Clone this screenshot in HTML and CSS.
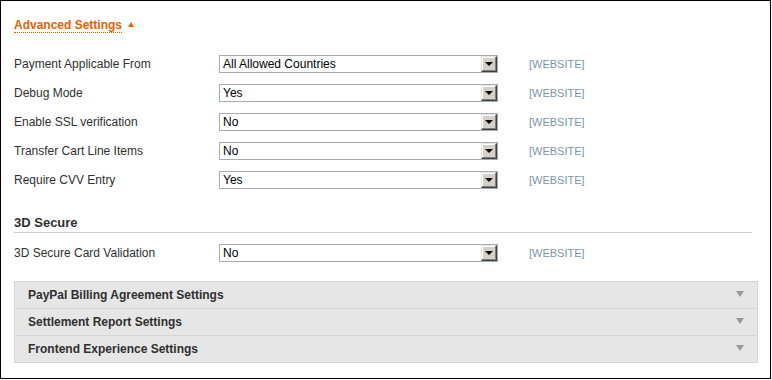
FILE: index.html
```html
<!DOCTYPE html>
<html>
<head>
<meta charset="utf-8">
<link rel="stylesheet" href="styles.css">
</head>
<body>
<div class="panel">
  <div class="section-head"><a class="toggle">Advanced Settings</a><span class="up"></span></div>

  <div class="rows">
    <div class="row">
      <div class="label">Payment Applicable From</div>
      <div class="select"><span class="val">All Allowed Countries</span><span class="btn"><span class="tri"></span></span></div>
      <div class="scope">[WEBSITE]</div>
    </div>
    <div class="row">
      <div class="label">Debug Mode</div>
      <div class="select"><span class="val">Yes</span><span class="btn"><span class="tri"></span></span></div>
      <div class="scope">[WEBSITE]</div>
    </div>
    <div class="row">
      <div class="label">Enable SSL verification</div>
      <div class="select"><span class="val">No</span><span class="btn"><span class="tri"></span></span></div>
      <div class="scope">[WEBSITE]</div>
    </div>
    <div class="row">
      <div class="label">Transfer Cart Line Items</div>
      <div class="select"><span class="val">No</span><span class="btn"><span class="tri"></span></span></div>
      <div class="scope">[WEBSITE]</div>
    </div>
    <div class="row">
      <div class="label">Require CVV Entry</div>
      <div class="select"><span class="val">Yes</span><span class="btn"><span class="tri"></span></span></div>
      <div class="scope">[WEBSITE]</div>
    </div>
  </div>

  <div class="group-title">3D Secure</div>
  <div class="rows">
    <div class="row">
      <div class="label">3D Secure Card Validation</div>
      <div class="select"><span class="val">No</span><span class="btn"><span class="tri"></span></span></div>
      <div class="scope">[WEBSITE]</div>
    </div>
  </div>

  <div class="accordion">
    <div class="acc-item"><span>PayPal Billing Agreement Settings</span><span class="down"></span></div>
    <div class="acc-item"><span>Settlement Report Settings</span><span class="down"></span></div>
    <div class="acc-item"><span>Frontend Experience Settings</span><span class="down"></span></div>
  </div>
</div>
</body>
</html>
```

FILE: styles.css
```css
html, body {
  margin: 0;
  padding: 0;
  background: #fff;
}
body {
  font-family: "Liberation Sans", Arial, sans-serif;
  font-size: 12px;
  color: #2f2f2f;
}
.panel {
  height: 377px;
  border: 1px solid #000;
  padding: 0 0 0 13px;
  box-sizing: content-box;
  width: 756px;
}
.section-head {
  padding-top: 17px;
  height: 15px;
  line-height: 14px;
  display: flex;
  align-items: center;
}
.toggle {
  color: #eb5e00;
  font-weight: bold;
  border-bottom: 1px dotted #eb5e00;
  line-height: 14px;
}
.up {
  width: 0;
  height: 0;
  border-left: 3px solid transparent;
  border-right: 3px solid transparent;
  border-bottom: 5px solid #eb5e00;
  margin-left: 6px;
  margin-top: -2px;
}
.rows {
  display: flex;
  flex-direction: column;
}
.section-head + .rows {
  margin-top: 16px;
}
.row {
  display: flex;
  align-items: center;
  height: 29px;
}
.label {
  width: 205px;
  flex: none;
}
.select {
  width: 279px;
  height: 18px;
  box-sizing: border-box;
  border: 1px solid #a5acb2;
  background: #fff;
  display: flex;
  align-items: center;
  flex: none;
  color: #000;
}
.val {
  flex: 1;
  padding-left: 3px;
  line-height: 14px;
}
.btn {
  width: 16px;
  height: 16px;
  box-sizing: border-box;
  background: #d4d0c8;
  border-top: 1px solid #e8e6e1;
  border-left: 1px solid #e8e6e1;
  border-right: 1px solid #404040;
  border-bottom: 1px solid #404040;
  box-shadow: inset -1px -1px 0 #808080, inset 1px 1px 0 #fff;
  display: flex;
  align-items: center;
  justify-content: center;
}
.tri {
  width: 0;
  height: 0;
  border-left: 4px solid transparent;
  border-right: 4px solid transparent;
  border-top: 4px solid #000;
}
.scope {
  margin-left: 31px;
  color: #7a97a8;
  font-size: 11px;
}
.group-title {
  margin-top: 22px;
  width: 738px;
  font-weight: bold;
  line-height: 14px;
  padding-bottom: 2px;
  border-bottom: 1px solid #cfcfcf;
  color: #2f2f2f;
  font-size: 13px;
}
.group-title + .rows {
  margin-top: 5px;
}
.accordion {
  margin-top: 14px;
  width: 744px;
  box-sizing: border-box;
  border: 1px solid #d6d6d6;
  background: #e6e6e6;
}
.acc-item {
  height: 26px;
  display: flex;
  align-items: center;
  justify-content: space-between;
  padding: 0 13px 0 13px;
  font-weight: bold;
  color: #2f2f2f;
}
.acc-item + .acc-item {
  border-top: 1px solid #d6d6d6;
}
.down {
  width: 0;
  height: 0;
  border-left: 4px solid transparent;
  border-right: 4px solid transparent;
  border-top: 6px solid #999;
  margin-top: -3px;
}
```
